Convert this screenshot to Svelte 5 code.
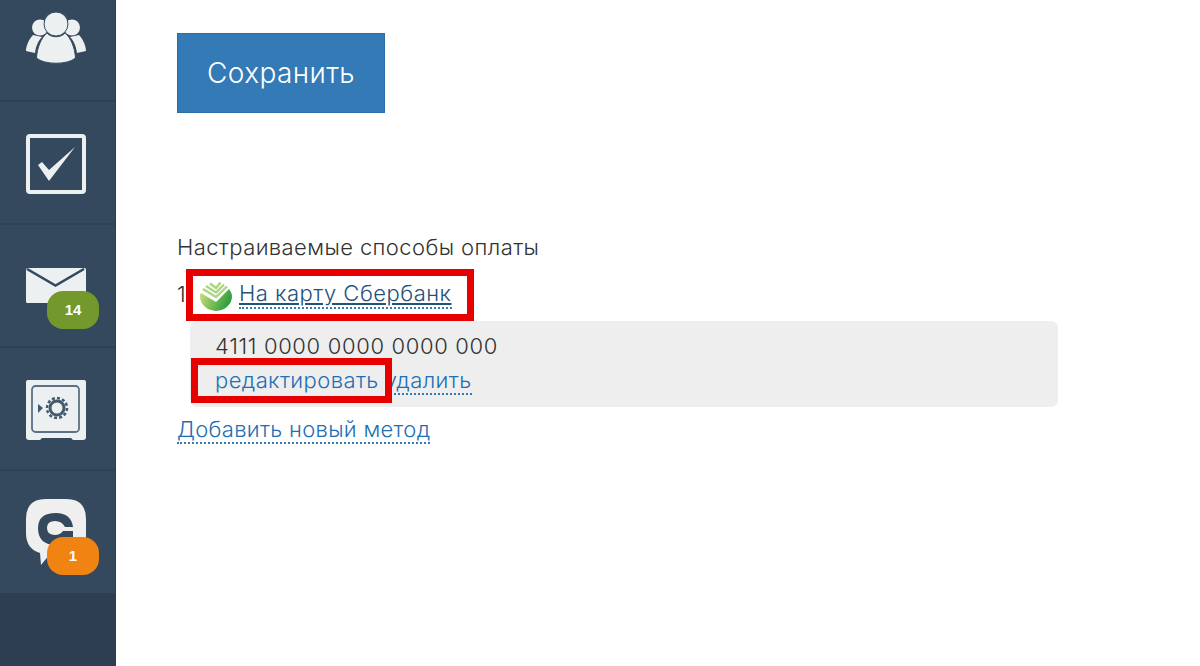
<script>
const cardNumber = "4111 0000 0000 0000 000";
</script>

<div class="page">
    <nav class="sidebar">
        <div class="item first">
            <svg class="icon" viewBox="0 0 60 52">
                <g fill="#ecf0f1">
                    <circle cx="14" cy="15.500" r="8"/>
                    <circle cx="46" cy="15.500" r="8"/>
                    <path d="M7 23 C3 27 0 34 0 39 L9 41 C10 34 12 29 16 25 Z"/>
                    <path d="M53 23 C57 27 60 34 60 39 L51 41 C50 34 48 29 44 25 Z"/>
                </g>
                <circle cx="30" cy="12" r="12" fill="#ecf0f1" stroke="#34495e" stroke-width="1"/>
                <path d="M21 21 C25 26 35 26 39 21 C45 26 49 36 49.500 46 C42 53 18 53 10.500 46 C11 36 15 26 21 21 Z" fill="#ecf0f1" stroke="#34495e" stroke-width="1"/>
            </svg>
        </div>
        <div class="item">
            <svg class="icon" viewBox="0 0 60 60">
                <rect x="2" y="2" width="56" height="56" rx="2" fill="none" stroke="#ecf0f1" stroke-width="4"/>
                <path d="M12 31 L16 28 L23 36 L49 13 L23 47 Z" fill="#ecf0f1"/>
            </svg>
        </div>
        <div class="item">
            <svg class="icon mail" viewBox="0 0 60 35">
                <rect width="60" height="35" rx="1.500" fill="#ecf0f1"/>
                <path d="M1 1 L29.500 17.500 L58 1" fill="none" stroke="#34495e" stroke-width="2.500"/>
            </svg>
            <span class="badge green">14</span>
        </div>
        <div class="item">
            <svg class="icon" viewBox="0 0 60 60">
                <path d="M2 0 H58 Q60 0 60 2 V57 Q60 60 57 60 H47 L45 58 H16 L14 60 H3 Q0 60 0 57 V2 Q0 0 2 0 Z" fill="#ecf0f1"/>
                <rect x="6" y="6" width="47" height="46" rx="3.500" fill="none" stroke="#5d7085" stroke-width="1.800"/>
                <circle cx="31" cy="28" r="7" fill="none" stroke="#44586e" stroke-width="3"/>
                <circle cx="31" cy="28" r="10" fill="none" stroke="#44586e" stroke-width="2.500" stroke-dasharray="3 2.200"/>
                <path d="M12 24 L17 28 L12 33 Z" fill="#44586e"/>
            </svg>
        </div>
        <div class="item">
            <svg class="icon" viewBox="0 0 60 66">
                <path d="M20 0 H40 Q60 0 60 20 V36 Q60 55 40 55 H24 L15 66 L14 54 Q0 50 0 34 V20 Q0 0 20 0 Z" fill="#efefef"/>
                <path d="M47 28 H39 Q36 22 29 22 Q21 22 21 29 Q21 36 29 36 Q34 36 37 32 H47 V40 Q41 46 30 46 Q12 46 12 29 Q12 14 30 14 Q45 14 47 28 Z" fill="#34495e"/>
            </svg>
            <span class="badge orange">1</span>
        </div>
    </nav>

    <main class="content">
        <button class="save">Сохранить</button>

        <p class="title">Настраиваемые способы оплаты</p>

        <div class="method">
            <span class="num">1.</span>
            <svg class="sber" viewBox="0 0 32 30">
                <defs>
                    <linearGradient id="sb" x1="0" y1="0" x2="1" y2="0.300">
                        <stop offset="0" stop-color="#cfe27a"/>
                        <stop offset="1" stop-color="#2f9e3c"/>
                    </linearGradient>
                </defs>
                <path d="M1 12 L16 21 L29 8 Q32 12 32 15 A16 15 0 0 1 0 15 Q0 13 1 12 Z" fill="url(#sb)"/>
                <path d="M3 8 L16 16 L27 5.500 M6 5 L16 11.500 L24 3.500 M10 2.500 L16 7 L20.500 1.500" fill="none" stroke="#a9d67e" stroke-width="2.400"/>
            </svg>
            <a class="sber-link" href="#top">На карту Сбербанк</a>
            <span class="mark mark-method"></span>
        </div>

        <div class="card">
            <div class="number">{cardNumber}</div>
            <div class="actions">
                <a class="dotted edit" href="#top">редактировать</a>
                <a class="dotted" href="#top">удалить</a>
                <span class="mark mark-edit"></span>
            </div>
        </div>

        <a class="dotted add" href="#top">Добавить новый метод</a>
    </main>
</div>

<style>
    :global(body) {
        background: #fff;
    }

    .page {
        display: flex;
        height: 666px;
        overflow: hidden;
        font-family: Inter, sans-serif;
        font-size: 22px;
        font-weight: 300;
        letter-spacing: 0.4px;
        color: #333;
    }

    .sidebar {
        flex: 0 0 116px;
        box-sizing: border-box;
        height: 666px;
        background: #2c3e50;
        border-right: 1px solid #2c3e50;
    }

    .item {
        position: relative;
        box-sizing: border-box;
        height: 123px;
        padding: 32px 0 0 26px;
        background: #34495e;
        border-bottom: 2px solid #2e4156;
    }

    .first {
        height: 102px;
        padding-top: 12px;
    }

    .item:last-child {
        height: 122px;
        padding-top: 28px;
        border-bottom: 0;
    }

    .icon {
        display: block;
        width: 60px;
    }

    .mail {
        margin-top: 11px;
    }

    .badge {
        position: absolute;
        left: 47px;
        top: 66px;
        width: 52px;
        height: 38px;
        border-radius: 16px;
        color: #fff;
        font: bold 15px/38px "Liberation Sans", sans-serif;
        letter-spacing: 0;
        text-align: center;
    }

    .green {
        background: #73992c;
    }

    .orange {
        background: #f08312;
    }

    .content {
        flex: 1;
        padding: 33px 0 0 61px;
    }

    .save {
        display: block;
        width: 208px;
        height: 80px;
        padding: 0;
        background: #337ab7;
        border: 1px solid #2e6da4;
        color: #fff;
        font: 300 28px Inter, sans-serif;
        letter-spacing: 0.4px;
    }

    .title {
        margin: 120px 0 0;
        line-height: 28px;
    }

    .method {
        position: relative;
        display: flex;
        align-items: center;
        height: 28px;
        margin-top: 19px;
    }

    .num {
        width: 23px;
    }

    .sber {
        width: 32px;
        height: 30px;
        margin: 4px 7px 0 0;
    }

    .sber-link {
        color: #23527c;
        text-decoration: underline;
        border-bottom: 2px dotted #337ab7;
        letter-spacing: 0.5px;
        line-height: 28px;
    }

    .mark {
        position: absolute;
        box-sizing: border-box;
        border: 7px solid #e60000;
    }

    .mark-method {
        left: 9px;
        top: -11px;
        width: 288px;
        height: 52px;
    }

    .card {
        box-sizing: border-box;
        width: 868px;
        height: 86px;
        margin: 13px 0 0 13px;
        padding: 10px 0 0 25px;
        background: #eee;
        border-radius: 7px;
    }

    .number {
        letter-spacing: 0.65px;
        line-height: 30px;
    }

    .actions {
        position: relative;
        display: flex;
        gap: 6px;
        margin-top: 6px;
    }

    .dotted {
        color: #1f6fb2;
        text-decoration: none;
        border-bottom: 2px dotted #337ab7;
        line-height: 26px;
    }

    .edit {
        border-bottom: 0;
    }

    .mark-edit {
        left: -24px;
        top: -9px;
        width: 201px;
        height: 45px;
    }

    .add {
        display: inline-block;
        margin-top: 9px;
        letter-spacing: 0.3px;
    }
</style>
